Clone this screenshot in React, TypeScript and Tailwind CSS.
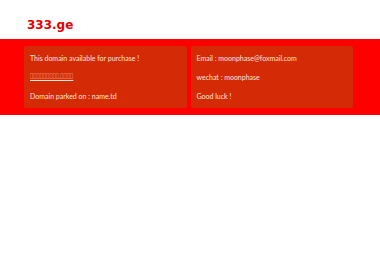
export default function App() {
    const tofu = '\uE000\uE001\uE002\uE003\uE004\uE005\uE006\uE007\uE008.\uE009\uE00A\uE00B\uE00C'

    return (
        <div className="min-h-[260px] bg-white font-['Lato',sans-serif]">
            <div className="ml-[24px] w-[329px] pt-[17px] pb-[6px]">
                <h1 className="pl-[3px] font-['DejaVu_Sans',sans-serif] text-[12px] leading-[16px] font-bold text-[#e60000]">
                    333.ge
                </h1>
            </div>
            <div className="bg-[#ff0000] py-[7px]">
                <div className="ml-[24px] grid w-[329px] grid-cols-2 gap-[4px]">
                    <div className="flex h-[62px] flex-col justify-between rounded-[2px] bg-[#d42a05] px-[6px] pt-[7px] pb-[7px] text-[7px] leading-[10px] text-[#ffe6d6]">
                        <p>This domain available for purchase !</p>
                        <p className="font-['Liberation_Sans',sans-serif] text-[8px]">
                            <span className="inline-block origin-left scale-x-[0.54] underline">{tofu}</span>
                        </p>
                        <p>Domain parked on : name.td</p>
                    </div>
                    <div className="flex h-[62px] flex-col justify-between rounded-[2px] bg-[#d42a05] px-[6px] pt-[7px] pb-[7px] text-[7px] leading-[10px] text-[#ffe6d6]">
                        <p>Email : moonphase@foxmail.com</p>
                        <p>wechat : moonphase</p>
                        <p>Good luck !</p>
                    </div>
                </div>
            </div>
        </div>
    )
}
